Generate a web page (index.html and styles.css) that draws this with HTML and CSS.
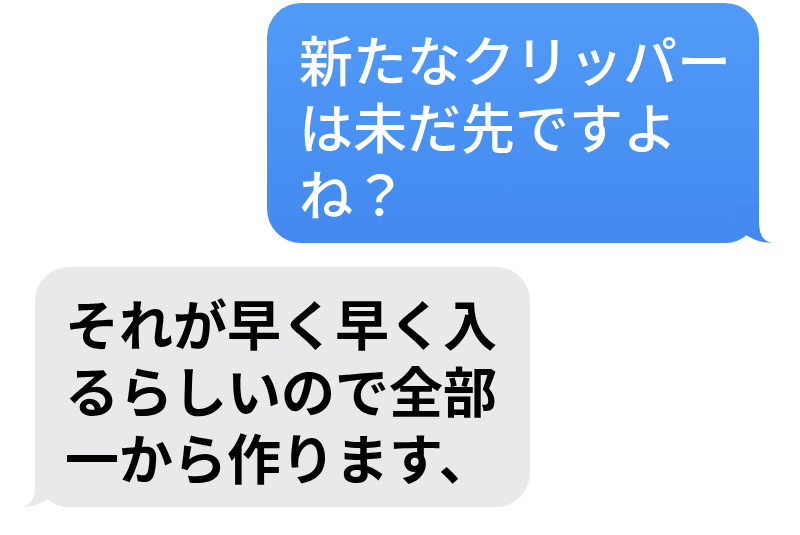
FILE: index.html
```html
<!DOCTYPE html>
<html lang="ja">
<head>
<meta charset="utf-8">
<link rel="stylesheet" href="styles.css">
</head>
<body>
<main class="thread">
  <div class="bubble sent">
    <p class="text">新たなクリッパー<br>は未だ先ですよ<br>ね？</p>
    <svg class="tail" viewBox="0 0 40 40" width="40" height="40" aria-hidden="true">
      <path d="M24 0 L24 19 Q24 38 37 40 Q22 40 8 30 L0 30 L0 0 Z"/>
    </svg>
  </div>
  <div class="bubble received">
    <p class="text">それが早く早く入<br>るらしいので全部<br>一から作ります、</p>
    <svg class="tail" viewBox="0 0 40 40" width="40" height="40" aria-hidden="true">
      <path d="M24 0 L24 19 Q24 38 37 40 Q22 40 8 30 L0 30 L0 0 Z"/>
    </svg>
  </div>
</main>
</body>
</html>
```
FILE: styles.css
```css
html, body {
  margin: 0;
  padding: 0;
  background: #ffffff;
}

body {
  width: 800px;
  height: 535px;
  overflow: hidden;
  font-family: "Noto Sans CJK JP", "Noto Sans", sans-serif;
}

.thread {
  display: flex;
  flex-direction: column;
  padding: 3px 41px 0 35px;
  gap: 24px;
}

.bubble {
  position: relative;
  box-sizing: border-box;
  width: 492px;
  height: 240px;
  border-radius: 34px;
  padding: 22px 30px 17px 32px;
}

.text {
  margin: 0;
  font-size: 54px;
  line-height: 67px;
  font-weight: 700;
  white-space: nowrap;
}

.sent {
  align-self: flex-end;
  background: linear-gradient(180deg, #519bf7 0%, #4389f0 100%);
  color: #ffffff;
}

.sent .text {
  font-weight: 500;
}

.received {
  align-self: flex-start;
  width: 495px;
  background: #e9e9eb;
  color: #000000;
  padding-left: 30px;
}

.tail {
  position: absolute;
  bottom: 0;
  display: block;
}

.sent .tail {
  right: -16px;
  fill: #4389f0;
}

.received .tail {
  left: -16px;
  fill: #e9e9eb;
  transform: scaleX(-1);
}
```
